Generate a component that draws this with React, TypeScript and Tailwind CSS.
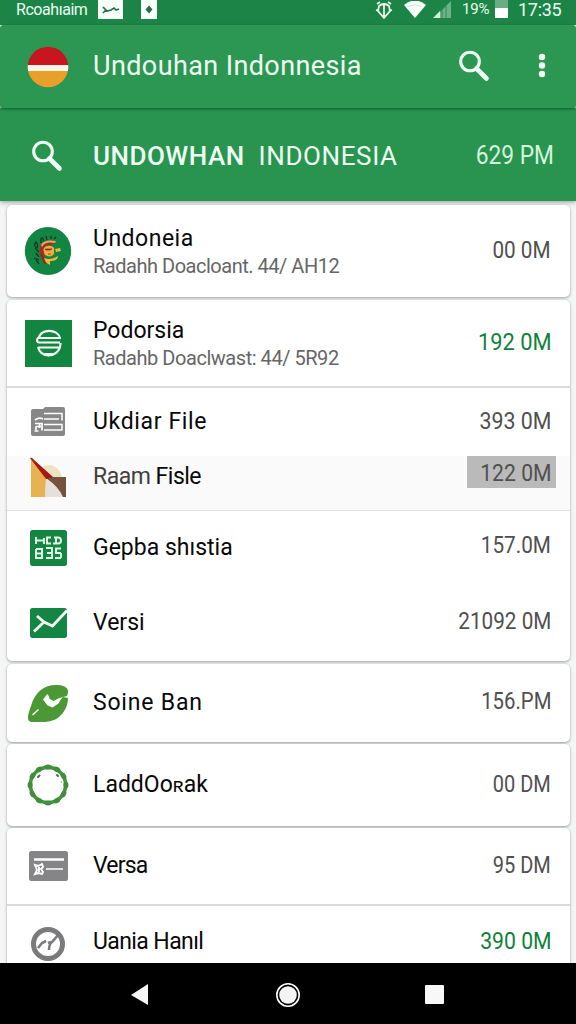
import type { ReactNode } from "react";

function SearchIcon() {
  return (
    <svg width="32" height="34" viewBox="0 0 32 34" fill="none" stroke="#f0fff4">
      <circle cx="12" cy="12.5" r="9.3" strokeWidth="3.1" />
      <path d="m18.500 19.500 10 10" strokeWidth="4.6" strokeLinecap="round" />
    </svg>
  );
}

function FlagIcon() {
  return (
    <svg className="mt-[2px]" width="42" height="42" viewBox="0 0 42 42">
      <clipPath id="flag"><circle cx="21" cy="21" r="20.3" /></clipPath>
      <g clipPath="url(#flag)">
        <rect width="42" height="19" fill="#c9151f" />
        <rect y="19" width="42" height="6" fill="#fff6ea" />
        <rect y="25" width="42" height="17" fill="#e9a02b" />
      </g>
    </svg>
  );
}

function WarriorIcon() {
  return (
    <svg width="48" height="48" viewBox="0 0 48 48">
      <ellipse cx="24" cy="24" rx="23.200" ry="24" fill="#128542" />
      <path d="M15 30 12 26M15 33l-5-2M15 25l-4-4M13 21c-3-2-3-4-1-6 2 2 2 4 1 6ZM17 16v-5M20 14l-2-4M23 13l-1-4M27 12V9M30 12l2-2M12 33l3 4" fill="none" stroke="#17351f" strokeWidth="1.300" />
      <path d="M16 20c2-6 9-7 16-6-1 3-4 4-7 4s-5 2-5 5l1 10c-4-3-6-8-5-13Z" fill="#ad2820" />
      <path d="M17 18c3-5 9-5 15-4l-1 2c-6-1-10-1-13 4Z" fill="#eba35c" />
      <path d="M20 21c2-3 8-3 10 0v6c-2 3-6 3-9 1-1-2-2-5-1-7Z" fill="#f2ac38" />
      <path d="m31 22 5-1 1 3-5 1ZM20 31c5 2 9 1 14-2 0 4-4 5-8 5v4l-5-3Z" fill="#f1b63b" />
      <path d="M21 22h7l-2 1h-4ZM24 27h3" fill="#782f22" stroke="#782f22" strokeWidth=".7" />
      <path d="m17 27 3 7 2 3" fill="none" stroke="#95251e" strokeWidth="2" />
    </svg>
  );
}

function BankIcon() {
  return (
    <svg width="47" height="47" viewBox="0 0 47 47" fill="none" stroke="#f5fff3" strokeWidth="2.200">
      <rect width="47" height="47" fill="#128541" stroke="none" />
      <path d="M14 18C15 8.500 33 8.500 35 18M12.500 18H36M13 18c-1.500 2-1 4.500 1 4.500h21M13 27.500h21M35.500 23c0 9-7 12.500-12 12.500S14 32 13 27" />
      <path d="m19 33 4.500 3.500 5-3.500Z" fill="#f5fff3" stroke="none" />
    </svg>
  );
}

function ContactIcon() {
  return (
    <svg width="36" height="32" viewBox="0 0 36 32">
      <path d="M3 3h10l2-2h18q2 0 2 2v25q0 2-2 2H3q-2 0-2-2V5q0-2 2-2Z" fill="#888" />
      <path d="M14 7.500h18v7M14 13h15M14 18.500h18v6M14 24h18" fill="none" stroke="#fff" strokeWidth="1.500" />
      <path d="M5 14q4-3 8-1M5 17.500h7v7M6 20.500h5M6 24v-4M9.500 17v5M4.500 25h4" fill="none" stroke="#fff" strokeWidth="1.700" />
    </svg>
  );
}

function FoldedPaperIcon() {
  return (
    <svg className="mt-px" width="38" height="42" viewBox="0 0 38 42">
      <path d="M2 2v38h16V20Z" fill="#e8b252" />
      <path d="m14 9 8-1q8 2 11 12H20Z" fill="#ebe3c2" />
      <path d="M17 21q-1 10-1 19h19q-4-11-18-19" fill="#e4e0dc" />
      <path d="M37 20v20h-3q-4-10-17-19l2-1Z" fill="#76513d" />
      <path d="M1 1q2-1 3 1l20 18-7 2Z" fill="#a9170f" />
    </svg>
  );
}

function GlyphIcon() {
  return (
    <svg width="39" height="38" viewBox="0 0 39 38">
      <rect x="1" y="1" width="37" height="36" rx="2.5" fill="#148542" />
      <path d="M7 8v7M7 11.500h7M15 9v6M22 8.500h-4v6h4M25 8.500h4q3 0 3 3t-3 3h-5M27 8v6M7 20h6v9H7v-9M7 24.500h6M17 19h6v10h-6M18 24h5M32 19.500h-5V24h5M32 29h-6M32 24v5" fill="none" stroke="#e3fbe8" strokeWidth="1.900" />
    </svg>
  );
}

function MailChartIcon() {
  return (
    <svg width="39" height="32" viewBox="0 0 39 32">
      <rect x="1" y="1" width="37" height="30" rx="2.5" fill="#148542" />
      <path d="m8 9 7 6 8.500 4L38 3.500M5 24.500l9.500-9" fill="none" stroke="#f4fff5" strokeWidth="2.800" />
    </svg>
  );
}

function LeafIcon() {
  return (
    <svg width="42" height="39" viewBox="0 0 42 39">
      <path d="M4 38C-1 37 1 30 4 22 8 8 17 1 29 1c7 0 13 2 12 8l-1 3-4 1 5 1c0 8-4 15-9 19-7 6-18 5-28 5Z" fill="#4c9736" />
      <path d="m16 15.500 4.300-5.500q2 2 2.500 5l4 2q4-3 9.200-4-3 3-4.500 6.500l-6 4-5-2Z" fill="#f8fff4" />
      <path d="m5.500 31 6-5.500" stroke="#f8fff4" strokeWidth="1.500" />
    </svg>
  );
}

const wreathKnots = Array.from({ length: 12 }, (_, i) => (i / 12) * Math.PI * 2);

function WreathIcon() {
  return (
    <svg className="-mt-px" width="42" height="42" viewBox="0 0 42 42" fill="none">
      <circle cx="21" cy="21" r="17.600" stroke="#45953f" strokeWidth="3.600" />
      {wreathKnots.map((a) => (
        <ellipse
          key={a}
          cx={21 + 17.9 * Math.cos(a)}
          cy={21 + 17.9 * Math.sin(a)}
          rx="2.500"
          ry="3.600"
          transform={`rotate(${(a * 180) / Math.PI} ${21 + 17.9 * Math.cos(a)} ${21 + 17.9 * Math.sin(a)})`}
          fill="#3f8f3a"
        />
      ))}
      <path d="m11 13 1.500-1.500M30 11l1 1" stroke="#397c37" strokeWidth="2" strokeLinecap="round" />
      <path d="m34 17 .5 2" stroke="#9bc28e" />
    </svg>
  );
}

function CardIcon() {
  return (
    <svg width="41" height="32" viewBox="0 0 41 32">
      <rect x="1" y="1" width="39" height="30" rx="2.5" fill="#858587" />
      <path d="M6 9.500h30" stroke="#fff" strokeWidth="2.600" />
      <path d="M18 19h17" stroke="#fff" strokeWidth="1.700" />
      <path d="m7 15 3 1 4-2 1 3-2 2 2 3-1 2-4-1-3 1 2-4ZM11 17v5" fill="none" stroke="#fff" strokeWidth="1.900" />
    </svg>
  );
}

function GaugeIcon() {
  return (
    <svg className="-mt-px" width="36" height="36" viewBox="0 0 36 36" fill="none" stroke="#7b7b7d">
      <circle cx="18" cy="18" r="14.500" strokeWidth="5" />
      <path d="m8 22 4-5 4-2M29 8l-7 8q-3 2-3 8M18 17l3-1" strokeWidth="2.600" />
    </svg>
  );
}

function StatusBar() {
  return (
    <header className="relative h-[25px] shrink-0 overflow-hidden bg-[#1d8447] text-[#e8fff0]">
      <div className="-mt-[3px] flex h-[25px] items-center pr-[15px] pl-4">
        <span className="w-[73px] text-[16px] tracking-[-0.450px] whitespace-nowrap">Rcoahıaim</span>
        <svg className="mt-px ml-[9px]" width="25" height="20" viewBox="0 0 25 20">
          <rect width="25" height="19" fill="#f7fff9" />
          <path d="m5 7 4 4 4-1 3-2 2 2 3-1M8 10l-3 3" fill="none" stroke="#2c6b43" strokeWidth="1.700" />
        </svg>
        <svg className="mt-px ml-[18px]" width="16" height="20" viewBox="0 0 16 20">
          <rect width="16" height="19" fill="#f7fff9" />
          <path d="m8 5.500 3.500 4L8 13.500l-3.500-4Z" fill="#2b6e43" />
        </svg>
        <div className="ml-auto flex h-[22px] items-center">
          <svg width="18" height="20" viewBox="0 0 18 20" fill="none" stroke="#f1fff4" strokeWidth="1.700">
            <path d="M4 6q5-4 10 0l1 5-6 7-6-7ZM9 4v13M2 4l3-2M13 2l3 2M1 10l3 1M14 11l3-1" />
          </svg>
          <svg className="ml-2.5" width="24" height="18" viewBox="0 0 24 18">
            <path d="M1 4Q12-5 23 4L12 17Z" fill="#f8fff9" />
            <path d="M4 6q8-4 15 0" fill="none" stroke="#cee9d6" />
          </svg>
          <svg className="ml-[6px]" width="19" height="20" viewBox="0 0 19 20">
            <path d="M1 18 18 1v17Z" fill="#6bb384" />
            <path d="m0 18 7-7v7Z" fill="#cbffd5" />
            <path d="M9 9v9M13 5v13" stroke="#348d55" />
          </svg>
          <span className="ml-[10px] w-[30px] text-[15px] tracking-[-0.2px]">19%</span>
          <svg className="ml-[3px]" width="14" height="20" viewBox="0 0 14 20">
            <rect width="13" height="9" fill="#69ad81" />
            <rect y="8" width="13" height="10" fill="#fff" />
          </svg>
          <span className="ml-[9px] w-[43px] text-[18px] tracking-[-0.300px] whitespace-nowrap">17:35</span>
        </div>
      </div>
    </header>
  );
}

type RowProps = {
  height: string;
  icon: ReactNode;
  name: ReactNode;
  value: string;
  detail?: string;
  green?: boolean;
  shaded?: boolean;
  nameClass?: string;
  detailClass?: string;
  valueClass?: string;
  fit?: string;
};

function Row({ height, icon, name, value, detail, green, shaded, nameClass = "", detailClass = "", valueClass = "", fit = "scale-x-[.9]" }: RowProps) {
  return (
    <div className={`flex shrink-0 items-center pr-[19px] ${height} ${shaded ? "bg-[#fafafa]" : ""}`}>
      <div className="flex w-[82px] shrink-0 justify-center">{icon}</div>
      <div className="ml-1 flex grow flex-col">
        <span className={`text-[23px] whitespace-pre text-[#080808] ${nameClass || "leading-[28px]"}`}>{name}</span>
        {detail && <span className={`text-[20px] leading-[26px] whitespace-nowrap text-[#666] ${detailClass}`}>{detail}</span>}
      </div>
      <div className={`text-[23px] leading-[28px] whitespace-nowrap ${green ? "text-[#10813b]" : "text-[#505050]"} ${valueClass}`}>
        <span className={`inline-block origin-right ${fit}`}>{value}</span>
      </div>
    </div>
  );
}

function Card({ className, children }: { className: string; children: ReactNode }) {
  return (
    <section className={`flex shrink-0 flex-col overflow-hidden rounded-[5px] bg-white shadow-[0_1px_3px_#0000005c] ${className}`}>
      {children}
    </section>
  );
}

export default function App() {
  return (
    <div className="flex h-[1024px] w-[576px] flex-col overflow-hidden bg-[#f4f5f5] font-['Roboto',sans-serif]">
      <StatusBar />
      <div className="relative flex h-[83px] shrink-0 items-center rounded-[4px] bg-[#2c9653] pr-[26px] pb-px pl-[27px] shadow-[0_1px_3px_#075b2c]">
        <FlagIcon />
        <h1 className="ml-6 grow text-[27px] leading-8 tracking-[0.400px] whitespace-nowrap text-[#effff2]">Undouhan Indonnesia</h1>
        <SearchIcon />
        <svg className="ml-[44px]" width="16" height="26" viewBox="0 0 16 26" fill="#f3fff5">
          <circle cx="8" cy="4" r="3.2" />
          <circle cx="8" cy="12.500" r="3.200" />
          <circle cx="8" cy="21" r="3.200" />
        </svg>
      </div>
      <div className="flex h-[93px] shrink-0 items-center bg-[#289450] pt-[2px] pr-[22px] pl-[31px] text-[#effff2] shadow-[0_1px_5px_#00000066]">
        <SearchIcon />
        <h2 className="ml-[30px] flex grow gap-[14px] text-[26px] leading-8 whitespace-nowrap">
          <span className="font-medium tracking-[0.500px]">UNDOWHAN</span>
          <span className="tracking-[0.600px]">INDONESIA</span>
        </h2>
        <span className="inline-block origin-right scale-x-[.91] text-[25px] text-[#d5f5dd]">629 PM</span>
      </div>
      <main className="flex h-[762px] shrink-0 flex-col overflow-hidden pt-1 pr-[6px] pl-[7px]">
        <Card className="h-[92px]">
          <Row height="h-[92px]" icon={<WarriorIcon />} name="Undoneia" nameClass="mt-[2px] leading-[28px] tracking-[0.500px]" detail="Radahh Doacloant. 44/ AH12" detailClass="tracking-[-0.480px]" value="00 0M" />
        </Card>
        <Card className="mt-[3px] h-[361px]">
          <Row height="h-[86px]" icon={<BankIcon />} name="Podorsia" nameClass="mt-[2px] leading-[28px]" detail="Radahb Doaclwast: 44/ 5R92" detailClass="tracking-[-0.460px]" value="192 0M" green fit="scale-x-[.95]" />
          <div className="h-[2px] shrink-0 bg-[#dadada]" />
          <Row height="h-[68px]" icon={<ContactIcon />} name="Ukdiar File" nameClass="leading-[28px] tracking-[0.650px]" value="393 0M" fit="scale-x-[.93]" />
          <Row height="h-[54px] pb-[12px]" icon={<FoldedPaperIcon />} name={<><span className="text-[#414141]">Raam</span> Fisle</>} nameClass="leading-[28px] tracking-[-0.500px]" value="122 0M" shaded valueClass="-mr-[5px] -mt-[10px] w-[89px] bg-[#bababa] pt-[4px] pr-[5px] text-right" fit="scale-x-[.92]" />
          <div className="h-px shrink-0 bg-[#dedede]" />
          <Row height="h-[73px]" icon={<GlyphIcon />} name="Gepba shıstia" value="157.0M" valueClass="-mt-[3px]" />
          <Row height="h-[77px]" icon={<MailChartIcon />} name="Versi" value="21092 0M" valueClass="-mt-px" />
        </Card>
        <Card className="mt-[3px] h-[78px]">
          <Row height="h-[78px]" icon={<LeafIcon />} name="Soine Ban" nameClass="-mt-px leading-[28px] tracking-[0.800px]" value="156.PM" valueClass="-mt-[2px]" fit="scale-x-[.885]" />
        </Card>
        <Card className="mt-[2px] h-[82px]">
          <Row height="h-[82px]" icon={<WreathIcon />} name={<>LaddOo<span className="text-[20px]">ʀ</span>ak</>} value="00 DM" valueClass="-mt-px" fit="scale-x-[.87]" />
        </Card>
        <Card className="mt-[2px] h-[150px]">
          <Row height="h-[76px]" icon={<CardIcon />} name="Versa" nameClass="leading-[28px] tracking-[-0.800px]" value="95 DM" valueClass="-mt-px" fit="scale-x-[.87]" />
          <div className="h-[2px] shrink-0 bg-[#dadada]" />
          <Row height="h-[76px]" icon={<GaugeIcon />} name="Uania Hanıl" nameClass="-mt-[4px] leading-[28px] tracking-[-0.600px]" value="390 0M" valueClass="-mt-[4px]" green fit="scale-x-[.92]" />
        </Card>
      </main>
      <nav className="relative flex h-[61px] shrink-0 items-center bg-black pt-[2px] pl-[130px]">
        <svg width="20" height="24" viewBox="0 0 20 24"><path d="M1 12 18 1v21Z" fill="#f7f7f7" /></svg>
        <svg className="ml-[125px]" width="26" height="26" viewBox="0 0 26 26">
          <circle cx="13" cy="13" r="11.200" fill="none" stroke="#fff" strokeWidth="1.600" />
          <circle cx="13" cy="13" r="8.800" fill="#f3f3f3" />
        </svg>
        <div className="ml-[124px] size-[19px] rounded-[1px] bg-[#f8f8f8]" />
      </nav>
    </div>
  );
}
